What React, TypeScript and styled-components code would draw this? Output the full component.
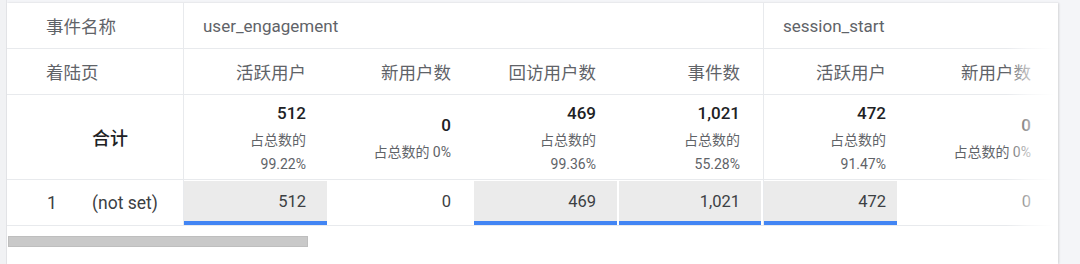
import React from "react";
import styled, { createGlobalStyle } from "styled-components";

const GlobalStyle = createGlobalStyle`
  html, body {
    margin: 0;
    padding: 0;
    background: #f4f5f8;
  }
  body {
    font-family: Roboto, "Noto Sans CJK SC", sans-serif;
  }
  * {
    box-sizing: border-box;
  }
`;

const Page = styled.div`
  display: flex;
  width: 1080px;
  height: 264px;
  overflow: hidden;
  background: #f4f5f8;
`;

const LeftRail = styled.div`
  width: 7px;
  background: #f1f2f4;
  border-right: 1px solid #e4e5e8;
`;

const Card = styled.div`
  position: relative;
  width: 1051px;
  margin-top: 3px;
  background: #fff;
  box-shadow: 1px 0 2px rgba(0, 0, 0, 0.14);
`;

const Row = styled.div<{ $h: number }>`
  display: grid;
  grid-template-columns: 177px repeat(6, 145px);
  height: ${(p) => p.$h}px;
  border-bottom: 1px solid #e8eaed;
`;

const LabelCell = styled.div<{ $strong?: boolean }>`
  display: flex;
  align-items: center;
  padding-left: ${(p) => (p.$strong ? 85 : 39)}px;
  border-right: 1px solid #e8eaed;
  font-size: ${(p) => (p.$strong ? 18 : 17.5)}px;
  font-weight: ${(p) => (p.$strong ? 500 : 400)};
  color: ${(p) => (p.$strong ? "#202124" : "#5f6368")};
`;

const GroupCell = styled.div<{ $span: number; $divider?: boolean }>`
  grid-column: span ${(p) => p.$span};
  display: flex;
  align-items: center;
  padding-left: 19px;
  font-size: 17px;
  color: #5f6368;
  border-right: ${(p) => (p.$divider ? "1px solid #e8eaed" : "none")};
`;

const HeadCell = styled.div<{ $divider?: boolean }>`
  display: flex;
  align-items: center;
  justify-content: flex-end;
  padding-right: 23px;
  font-size: 17.5px;
  color: #5f6368;
  border-right: ${(p) => (p.$divider ? "1px solid #e8eaed" : "none")};
`;

const TotalCell = styled.div<{ $divider?: boolean }>`
  display: flex;
  flex-direction: column;
  align-items: flex-end;
  justify-content: center;
  padding-right: 23px;
  padding-top: 3px;
  border-right: ${(p) => (p.$divider ? "1px solid #e8eaed" : "none")};
`;

const TotalValue = styled.div`
  font-size: 17px;
  font-weight: 500;
  line-height: 24px;
  margin-bottom: 3px;
  color: #202124;
`;

const TotalShare = styled.div`
  font-size: 14px;
  line-height: 24px;
  color: #5f6368;
  white-space: nowrap;
`;

const IndexCell = styled.div`
  display: flex;
  align-items: center;
  border-right: 1px solid #e8eaed;
  font-size: 17.5px;
  color: #3c4043;
`;

const IndexNum = styled.span`
  width: 85px;
  padding-left: 40px;
`;

const DataCell = styled.div<{ $divider?: boolean }>`
  position: relative;
  padding: 1px 2px 0 0;
  border-right: ${(p) => (p.$divider ? "1px solid #e8eaed" : "none")};
`;

const Heat = styled.div<{ $on?: boolean }>`
  display: flex;
  align-items: center;
  justify-content: flex-end;
  height: 100%;
  padding-right: 21px;
  font-size: 16.5px;
  color: #3c4043;
  background: ${(p) => (p.$on ? "#ebebeb" : "transparent")};
  border-bottom: 4px solid ${(p) => (p.$on ? "#4285f4" : "transparent")};
`;

const Fade = styled.div`
  position: absolute;
  top: 0;
  right: 0;
  width: 52px;
  height: 226px;
  pointer-events: none;
  background: linear-gradient(
    to right,
    rgba(255, 255, 255, 0) 0%,
    rgba(255, 255, 255, 0.6) 42%,
    rgba(255, 255, 255, 1) 92%
  );
`;

const Scrollbar = styled.div`
  width: 300px;
  height: 11px;
  margin: 10px 0 0 1px;
  background: #c9c9c9;
  border: 1px solid #bebebe;
`;

type Metric = { value: string; share: string[]; heat?: boolean; fill?: number };

const metrics: Metric[] = [
  { value: "512", share: ["占总数的", "99.22%"], heat: true },
  { value: "0", share: ["占总数的 0%"] },
  { value: "469", share: ["占总数的", "99.36%"], heat: true },
  { value: "1,021", share: ["占总数的", "55.28%"], heat: true },
  { value: "472", share: ["占总数的", "91.47%"], heat: true, fill: 133 },
  { value: "0", share: ["占总数的 0%"] },
];

const headers = ["活跃用户", "新用户数", "回访用户数", "事件数", "活跃用户", "新用户数"];

const App = (): JSX.Element => {
  return (
    <React.Fragment>
      <GlobalStyle />
      <Page>
        <LeftRail />
        <Card>
          <Row $h={46}>
            <LabelCell>事件名称</LabelCell>
            <GroupCell $span={4} $divider>
              user_engagement
            </GroupCell>
            <GroupCell $span={2}>session_start</GroupCell>
          </Row>
          <Row $h={46}>
            <LabelCell>着陆页</LabelCell>
            {headers.map((h, i) => (
              <HeadCell key={i} $divider={i === 3}>
                {h}
              </HeadCell>
            ))}
          </Row>
          <Row $h={85}>
            <LabelCell $strong>合计</LabelCell>
            {metrics.map((m, i) => (
              <TotalCell key={i} $divider={i === 3}>
                <TotalValue>{m.value}</TotalValue>
                {m.share.map((s) => (
                  <TotalShare key={s}>{s}</TotalShare>
                ))}
              </TotalCell>
            ))}
          </Row>
          <Row $h={46}>
            <IndexCell>
              <IndexNum>1</IndexNum>
              (not set)
            </IndexCell>
            {metrics.map((m, i) => (
              <DataCell key={i} $divider={i === 3}>
                <Heat $on={m.heat} style={m.fill ? { width: m.fill, paddingRight: 11 } : undefined}>
                  {m.value}
                </Heat>
              </DataCell>
            ))}
          </Row>
          <Scrollbar />
          <Fade />
        </Card>
      </Page>
    </React.Fragment>
  );
};

export default App;
